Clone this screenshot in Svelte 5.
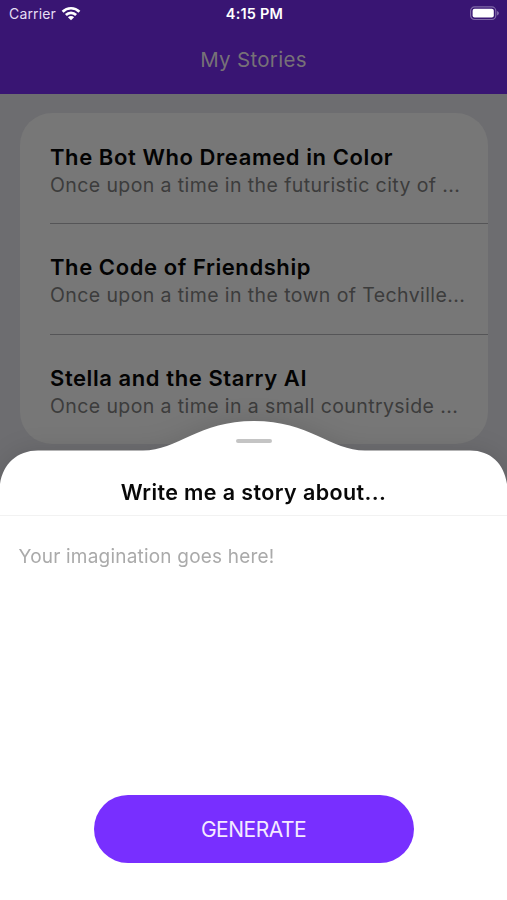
<script>
	const stories = [
		{
			title: 'The Bot Who Dreamed in Color',
			preview: 'Once upon a time in the futuristic city of ...'
		},
		{
			title: 'The Code of Friendship',
			preview: 'Once upon a time in the town of Techville...'
		},
		{
			title: 'Stella and the Starry AI',
			preview: 'Once upon a time in a small countryside ...'
		}
	];

	let prompt = $state('');
</script>

<div class="screen">
	<header>
		<div class="status">
			<div class="carrier">
				<span>Carrier</span>
				<svg class="wifi" viewBox="0 0 20 15" width="20" height="15">
					<g fill="none" stroke="#fff" stroke-width="2.7">
						<path d="M1.6 5.7a12 12 0 0 1 16.8 0" />
						<path d="M4.9 9a7.2 7.2 0 0 1 10.2 0" />
					</g>
					<path d="M10 14.3 6.9 11.2a4.4 4.4 0 0 1 6.2 0z" fill="#fff" />
				</svg>
			</div>
			<time>4:15 PM</time>
			<svg class="battery" viewBox="0 0 32 15" width="32" height="15">
				<rect x="2.6" y="0.9" width="25.2" height="12.6" rx="4" fill="none" stroke="#8069a8" stroke-width="1.2" />
				<rect x="4.6" y="2.8" width="21.2" height="8.8" rx="2" fill="#fff" />
				<path d="M29 5.1c2.6 1 2.6 3.4 0 4.4z" fill="#8069a8" />
			</svg>
		</div>
		<h1>My Stories</h1>
	</header>

	<main>
		<ul class="stories">
			{#each stories as story}
				<li>
					<h2>{story.title}</h2>
					<p>{story.preview}</p>
				</li>
			{/each}
		</ul>
	</main>

	<section class="sheet">
		<svg class="outline" viewBox="0 0 507 66" width="507" height="66">
			<path
				d="M0 66V63C3 43 17 29.5 38 29.5H143C177 29.5 199 0 254 0C309 0 331 29.5 365 29.5H470C491 29.5 504 43 507 63V66Z"
				fill="#fff"
			/>
		</svg>
		<div class="content">
			<div class="handle"></div>
			<h3>Write me a story about...</h3>
			<textarea placeholder="Your imagination goes here!" bind:value={prompt}></textarea>
			<button>GENERATE</button>
		</div>
	</section>
</div>

<style>
	:global(body) {
		margin: 0;
	}

	.screen {
		position: relative;
		width: 507px;
		height: 900px;
		overflow: hidden;
		background: #6d6d70;
		font-family: Inter, 'Liberation Sans', sans-serif;
	}

	header {
		height: 94px;
		background: #391573;
		text-align: center;
	}

	.status {
		display: grid;
		grid-template-columns: 1fr auto 1fr;
		align-items: center;
		height: 27px;
		padding: 0 7px 0 9px;
		color: #fff;
		font-size: 14px;
	}

	.carrier {
		display: flex;
		align-items: center;
		gap: 5px;
		color: #e6def3;
		letter-spacing: 0.15px;
	}

	.wifi {
		margin-top: -1px;
	}

	time {
		font-size: 14.5px;
		font-weight: 600;
		letter-spacing: 0.2px;
	}

	.battery {
		justify-self: end;
	}

	h1 {
		margin: 20px 0 0;
		color: #777177;
		font-size: 20.5px;
		font-weight: 400;
		line-height: 26px;
		letter-spacing: 0.3px;
	}

	main {
		padding: 19px 19px 0 20px;
	}

	.stories {
		height: 331px;
		margin: 0;
		padding: 0 0 0 30px;
		border-radius: 32px;
		background: #777;
		list-style: none;
	}

	li {
		box-sizing: border-box;
		height: 110.8px;
		padding-top: 29.7px;
		border-bottom: 1.5px solid #555557;
		white-space: nowrap;
	}

	li:last-child {
		border-bottom: none;
	}

	h2 {
		margin: 0;
		color: #030303;
		font-size: 22px;
		font-weight: 600;
		line-height: 28px;
		letter-spacing: 0.58px;
	}

	p {
		margin: 0;
		color: #3c3c3c;
		font-size: 19.5px;
		font-weight: 400;
		line-height: 28px;
		letter-spacing: 0.4px;
	}

	.sheet {
		position: absolute;
		left: 0;
		bottom: 0;
		width: 507px;
		height: 479px;
		filter: drop-shadow(0 0 12px rgba(0, 0, 0, 0.12));
	}

	.outline {
		display: block;
	}

	.content {
		display: flex;
		flex-direction: column;
		align-items: center;
		height: 413px;
		background: #fff;
	}

	.handle {
		flex: none;
		width: 36px;
		height: 4px;
		margin-top: -48px;
		border-radius: 2px;
		background: #c4c4c4;
	}

	h3 {
		width: 100%;
		margin: 35px 0 0;
		padding-bottom: 9px;
		border-bottom: 1px solid #f2f2f2;
		color: #080808;
		font-size: 21.5px;
		font-weight: 600;
		line-height: 28px;
		letter-spacing: 0.4px;
		text-align: center;
	}

	textarea {
		box-sizing: border-box;
		flex: none;
		width: 100%;
		height: 248px;
		margin: 0;
		padding: 27px 18.5px;
		border: none;
		outline: none;
		background: none;
		font: 400 19px/28px Inter, 'Liberation Sans', sans-serif;
		letter-spacing: 0.2px;
		resize: none;
	}

	textarea::placeholder {
		color: #aaa;
	}

	button {
		width: 320px;
		height: 68px;
		margin-top: 31px;
		padding: 2px 0 0;
		border: none;
		border-radius: 34px;
		background: #782fff;
		color: #f4e9ff;
		font: 400 21px/28px Inter, 'Liberation Sans', sans-serif;
		letter-spacing: -0.5px;
	}
</style>
